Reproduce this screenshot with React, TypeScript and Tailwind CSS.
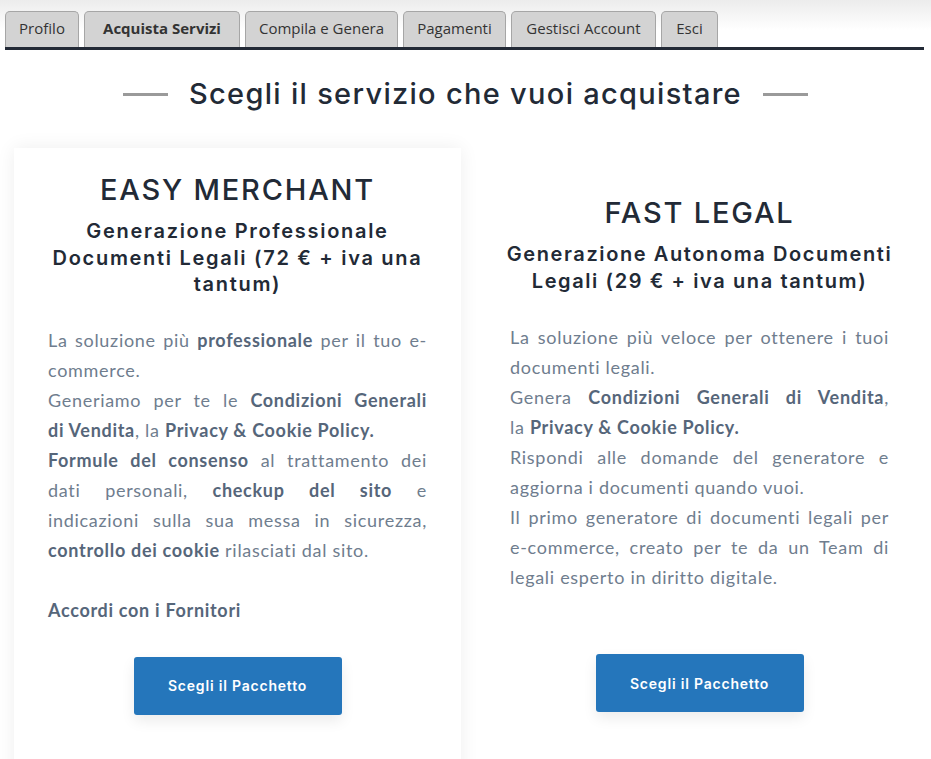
import React from "react";

const tabs = [
  { label: "Profilo", w: "w-[74px]", active: false },
  { label: "Acquista Servizi", w: "w-[156px]", active: true },
  { label: "Compila e Genera", w: "w-[153px]", active: false },
  { label: "Pagamenti", w: "w-[103px]", active: false },
  { label: "Gestisci Account", w: "w-[145px]", active: false },
  { label: "Esci", w: "w-[57px]", active: false },
];

const HEAD = "font-['Inter','Noto_Sans',sans-serif]";
const BODY = "font-['Lato','Open_Sans',sans-serif]";

function J({ children, last }: { children: React.ReactNode; last?: boolean }) {
  return (
    <div className={last ? "text-left" : "text-justify [text-align-last:justify]"}>{children}</div>
  );
}

function B({ children }: { children: React.ReactNode }) {
  return <b className="font-bold text-[#56667a]">{children}</b>;
}

function Button() {
  return (
    <button
      className={`${HEAD} w-[208px] h-[58px] rounded-[3px] bg-[#2576bb] text-white text-[14px] font-semibold tracking-[0.8px] shadow-[0_6px_14px_rgba(0,0,0,0.08)]`}
    >
      Scegli il Pacchetto
    </button>
  );
}

export default function App() {
  return (
    <div className="w-[931px] h-[759px] overflow-hidden bg-white">
      <div className="bg-gradient-to-b from-[#ececec] to-white to-[30px] pt-[11px] px-[5px]">
        <div className="flex gap-[5px]">
          {tabs.map((t) => (
            <div
              key={t.label}
              className={`${t.w} h-[36px] pb-[3px] flex items-center justify-center rounded-t-[5px] border border-b-0 border-[#a6a6a6] bg-[#d3d3d3] text-[15px] text-[#333] font-['Open_Sans',sans-serif] ${
                t.active ? "font-bold" : ""
              }`}
            >
              {t.label}
            </div>
          ))}
        </div>
      </div>
      <div className="ml-[5px] mr-[7px] h-[3px] bg-[#232a36]" />

      <div className="mt-[26px] flex items-center justify-center gap-[21px]">
        <div className="w-[45px] h-[3px] bg-[#9a9a9a]" />
        <h1 className={`${HEAD} text-[29px] leading-[36px] font-medium text-[#222a36] tracking-[1.3px]`}>
          Scegli il servizio che vuoi acquistare
        </h1>
        <div className="w-[45px] h-[3px] bg-[#9a9a9a]" />
      </div>

      <div className="mt-[36px] ml-[14px] flex gap-[15px] items-start">
        {/* Left card */}
        <div className="w-[447px] h-[640px] bg-white shadow-[0_0_18px_rgba(0,0,0,0.07)] px-[34px] pt-[24px] flex flex-col items-center">
          <h2 className={`${HEAD} text-[29px] leading-[36px] font-medium text-[#222a36] tracking-[1.8px]`}>EASY MERCHANT</h2>
          <p className={`${HEAD} mt-[10px] text-center text-[20px] leading-[26.5px] font-semibold text-[#222a36] tracking-[1.7px] whitespace-nowrap`}>
            Generazione Professionale
            <br />
            Documenti Legali (72 € + iva una
            <br />
            tantum)
          </p>
          <div className={`${BODY} mt-[27px] w-full text-[18px] leading-[30px] text-[#6f7d8e] tracking-[0.7px]`}>
            <J>
              La soluzione più <B>professionale</B> per il tuo e-
            </J>
            <J last>commerce.</J>
            <J>
              Generiamo per te le <B>Condizioni Generali</B>
            </J>
            <J last>
              <B>di Vendita</B>, la <B>Privacy &amp; Cookie Policy.</B>
            </J>
            <J>
              <B>Formule del consenso</B> al trattamento dei
            </J>
            <J>
              dati personali, <B>checkup del sito</B> e
            </J>
            <J>indicazioni sulla sua messa in sicurezza,</J>
            <J last>
              <B>controllo dei cookie</B> rilasciati dal sito.
            </J>
            <div className="h-[30px]" />
            <J last>
              <B>Accordi con i Fornitori</B>
            </J>
          </div>
          <div className="mt-[32px]">
            <Button />
          </div>
        </div>

        {/* Right card */}
        <div className="w-[447px] h-[640px] bg-white px-[34px] pt-[47px] flex flex-col items-center">
          <h2 className={`${HEAD} text-[29px] leading-[36px] font-medium text-[#222a36] tracking-[1.8px]`}>FAST LEGAL</h2>
          <p className={`${HEAD} mt-[10px] text-center text-[20px] leading-[26.5px] font-semibold text-[#222a36] tracking-[1.6px] whitespace-nowrap`}>
            Generazione Autonoma Documenti
            <br />
            Legali (29 € + iva una tantum)
          </p>
          <div className={`${BODY} mt-[28px] w-full text-[18px] leading-[30px] text-[#6f7d8e] tracking-[0.7px]`}>
            <J>La soluzione più veloce per ottenere i tuoi</J>
            <J last>documenti legali.</J>
            <J>
              Genera <B>Condizioni Generali di Vendita</B>,
            </J>
            <J last>
              la <B>Privacy &amp; Cookie Policy.</B>
            </J>
            <J>Rispondi alle domande del generatore e</J>
            <J last>aggiorna i documenti quando vuoi.</J>
            <J>Il primo generatore di documenti legali per</J>
            <J>e-commerce, creato per te da un Team di</J>
            <J last>legali esperto in diritto digitale.</J>
          </div>
          <div className="mt-[62px]">
            <Button />
          </div>
        </div>
      </div>
    </div>
  );
}
